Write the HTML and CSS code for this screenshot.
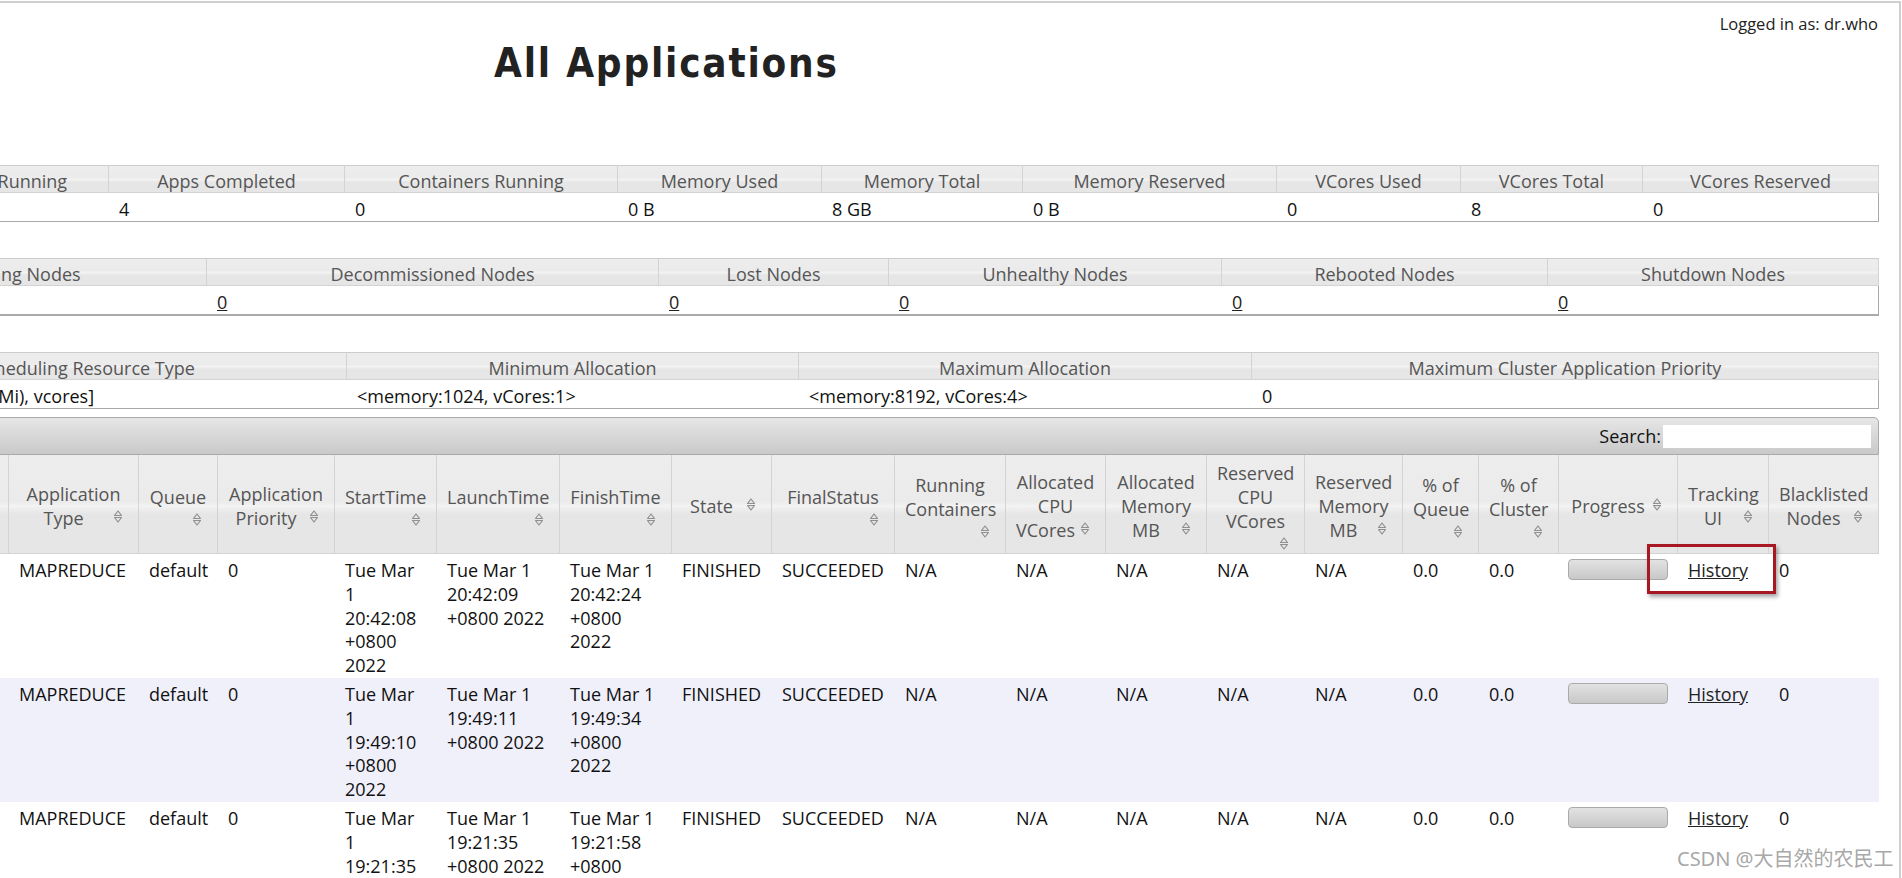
FILE: index.html
```html
<!DOCTYPE html>
<html lang="en">
<head>
<meta charset="UTF-8">
<title>All Applications</title>
<link rel="stylesheet" href="styles.css">
</head>
<body>
<div class="frame">
  <div class="header">
    <div class="user">Logged in as: dr.who</div>
    <h1>All Applications</h1>
  </div>

  <div class="main">
    <!-- cluster metrics -->
    <table class="info">
      <colgroup>
        <col style="width:155px"><col style="width:155px"><col style="width:199px"><col style="width:236px">
        <col style="width:273px"><col style="width:204px"><col style="width:201px"><col style="width:254px">
        <col style="width:184px"><col style="width:182px"><col style="width:236px">
      </colgroup>
      <thead>
        <tr>
          <th>Apps Submitted</th><th>Apps Pending</th><th>Apps Running</th><th>Apps Completed</th>
          <th>Containers Running</th><th>Memory Used</th><th>Memory Total</th><th>Memory Reserved</th>
          <th>VCores Used</th><th>VCores Total</th><th>VCores Reserved</th>
        </tr>
      </thead>
      <tbody>
        <tr>
          <td>4</td><td>0</td><td>0</td><td>4</td><td>0</td><td>0 B</td><td>8 GB</td><td>0 B</td>
          <td>0</td><td>8</td><td>0</td>
        </tr>
      </tbody>
    </table>

    <!-- node metrics -->
    <table class="info nodes">
      <colgroup>
        <col style="width:147px"><col style="width:460px"><col style="width:452px"><col style="width:230px">
        <col style="width:333px"><col style="width:326px"><col style="width:331px">
      </colgroup>
      <thead>
        <tr>
          <th>Active Nodes</th><th>Decommissioning Nodes</th><th>Decommissioned Nodes</th><th>Lost Nodes</th>
          <th>Unhealthy Nodes</th><th>Rebooted Nodes</th><th>Shutdown Nodes</th>
        </tr>
      </thead>
      <tbody>
        <tr>
          <td><a href="#">1</a></td><td><a href="#">0</a></td><td><a href="#">0</a></td><td><a href="#">0</a></td>
          <td><a href="#">0</a></td><td><a href="#">0</a></td><td><a href="#">0</a></td>
        </tr>
      </tbody>
    </table>

    <!-- scheduler -->
    <table class="info sched">
      <colgroup>
        <col style="width:225px"><col style="width:522px"><col style="width:452px"><col style="width:453px"><col style="width:627px">
      </colgroup>
      <thead>
        <tr>
          <th>Scheduler Type</th><th>Scheduling Resource Type</th><th>Minimum Allocation</th>
          <th>Maximum Allocation</th><th>Maximum Cluster Application Priority</th>
        </tr>
      </thead>
      <tbody>
        <tr>
          <td>Capacity Scheduler</td><td>[memory-mb (unit=Mi), vcores]</td><td>&lt;memory:1024, vCores:1&gt;</td>
          <td>&lt;memory:8192, vCores:4&gt;</td><td>0</td>
        </tr>
      </tbody>
    </table>

    <!-- applications -->
    <div class="toolbar">
      <label>Search:</label><input type="text">
    </div>
    <table class="apps">
      <colgroup>
        <col style="width:220px"><col style="width:70px"><col style="width:119px">
        <col style="width:130px"><col style="width:79px"><col style="width:117px"><col style="width:102px">
        <col style="width:123px"><col style="width:112px"><col style="width:100px"><col style="width:123px">
        <col style="width:111px"><col style="width:100px"><col style="width:101px"><col style="width:98px">
        <col style="width:98px"><col style="width:76px"><col style="width:80px"><col style="width:119px">
        <col style="width:91px"><col style="width:110px">
      </colgroup>
      <thead>
        <tr>
          <th><div class="sw">ID<span class="si"></span></div></th>
          <th><div class="sw">User<span class="si"></span></div></th>
          <th><div class="sw">Name<span class="si"></span></div></th>
          <th><div class="sw">Application Type<span class="si"></span></div></th>
          <th><div class="sw">Queue<span class="si"></span></div></th>
          <th><div class="sw">Application Priority<span class="si"></span></div></th>
          <th><div class="sw">StartTime<span class="si"></span></div></th>
          <th><div class="sw">LaunchTime<span class="si"></span></div></th>
          <th><div class="sw">FinishTime<span class="si"></span></div></th>
          <th><div class="sw">State<span class="si"></span></div></th>
          <th><div class="sw">FinalStatus<span class="si"></span></div></th>
          <th><div class="sw">Running Containers<span class="si"></span></div></th>
          <th><div class="sw">Allocated CPU VCores<span class="si"></span></div></th>
          <th><div class="sw">Allocated Memory MB<span class="si"></span></div></th>
          <th><div class="sw">Reserved CPU VCores<span class="si"></span></div></th>
          <th><div class="sw">Reserved Memory MB<span class="si"></span></div></th>
          <th><div class="sw">% of Queue<span class="si"></span></div></th>
          <th><div class="sw">% of Cluster<span class="si"></span></div></th>
          <th><div class="sw">Progress<span class="si"></span></div></th>
          <th><div class="sw">Tracking UI<span class="si"></span></div></th>
          <th><div class="sw">Blacklisted Nodes<span class="si"></span></div></th>
        </tr>
      </thead>
      <tbody>
        <tr>
          <td class="clip"><a href="#">application_1646137323226_0004</a></td><td class="clip">atguigu</td><td class="clip">word count</td>
          <td>MAPREDUCE</td><td>default</td><td>0</td>
          <td>Tue Mar 1 20:42:08 +0800 2022</td><td>Tue Mar 1 20:42:09 +0800 2022</td><td>Tue Mar 1 20:42:24 +0800 2022</td>
          <td>FINISHED</td><td>SUCCEEDED</td><td>N/A</td><td>N/A</td><td>N/A</td><td>N/A</td><td>N/A</td>
          <td>0.0</td><td>0.0</td><td><div class="bar"></div></td>
          <td class="track"><a href="#">History</a><div class="mark"></div></td><td>0</td>
        </tr>
        <tr class="even">
          <td class="clip"><a href="#">application_1646137323226_0003</a></td><td class="clip">atguigu</td><td class="clip">word count</td>
          <td>MAPREDUCE</td><td>default</td><td>0</td>
          <td>Tue Mar 1 19:49:10 +0800 2022</td><td>Tue Mar 1 19:49:11 +0800 2022</td><td>Tue Mar 1 19:49:34 +0800 2022</td>
          <td>FINISHED</td><td>SUCCEEDED</td><td>N/A</td><td>N/A</td><td>N/A</td><td>N/A</td><td>N/A</td>
          <td>0.0</td><td>0.0</td><td><div class="bar"></div></td>
          <td><a href="#">History</a></td><td>0</td>
        </tr>
        <tr>
          <td class="clip"><a href="#">application_1646137323226_0002</a></td><td class="clip">atguigu</td><td class="clip">word count</td>
          <td>MAPREDUCE</td><td>default</td><td>0</td>
          <td>Tue Mar 1 19:21:35 +0800 2022</td><td>Tue Mar 1 19:21:35 +0800 2022</td><td>Tue Mar 1 19:21:58 +0800 2022</td>
          <td>FINISHED</td><td>SUCCEEDED</td><td>N/A</td><td>N/A</td><td>N/A</td><td>N/A</td><td>N/A</td>
          <td>0.0</td><td>0.0</td><td><div class="bar"></div></td>
          <td><a href="#">History</a></td><td>0</td>
        </tr>
        <tr class="even">
          <td class="clip"><a href="#">application_1646137323226_0001</a></td><td class="clip">atguigu</td><td class="clip">word count</td>
          <td>MAPREDUCE</td><td>default</td><td>0</td>
          <td>Tue Mar 1 19:10:02 +0800 2022</td><td>Tue Mar 1 19:10:03 +0800 2022</td><td>Tue Mar 1 19:10:27 +0800 2022</td>
          <td>FINISHED</td><td>SUCCEEDED</td><td>N/A</td><td>N/A</td><td>N/A</td><td>N/A</td><td>N/A</td>
          <td>0.0</td><td>0.0</td><td><div class="bar"></div></td>
          <td><a href="#">History</a></td><td>0</td>
        </tr>
      </tbody>
    </table>
  </div>
</div>
<div class="watermark">CSDN @大自然的农民工</div>
</body>
</html>
```

FILE: styles.css
```css
body {
  margin: 0;
  overflow: hidden;
  background: #fff;
  font-family: "Open Sans", "Noto Sans", sans-serif;
  font-size: 18px;
  color: #111;
}

.frame {
  width: 1899px;
  height: 1000px;
  margin-top: 1px;
  border-top: 2px solid #cfcfcf;
  border-right: 2px solid #cfcfcf;
}

/* header */
.header {
  height: 162px;
  overflow: hidden;
}

.user {
  margin-top: 10px;
  padding-right: 21px;
  text-align: right;
  font-size: 16.5px;
  line-height: 22px;
  color: #222;
}

h1 {
  margin: 5px 0 0 494px;
  font-family: "DejaVu Sans Condensed", "DejaVu Sans", sans-serif;
  font-weight: bold;
  font-size: 40px;
  line-height: 46px;
  letter-spacing: 1.8px;
  color: #222;
}

/* content is scrolled, the left part is out of view */
.main {
  margin-left: -400px;
  width: 2279px;
}

table {
  width: 2279px;
  table-layout: fixed;
  border-spacing: 0;
}

a {
  color: #222;
  text-decoration: underline;
}

/* small info tables */
.info {
  margin-bottom: 36px;
}

.info th {
  padding: 4px 10px 0;
  line-height: 22px;
  font-weight: normal;
  color: #555;
  text-align: center;
  white-space: nowrap;
  background: linear-gradient(#ededed 0%, #ebebeb 45%, #f3f3f3 52%, #e6e6e6 62%, #e6e6e6 100%);
  border-top: 1px solid #cccccc;
  border-bottom: 1px solid #d3d3d3;
  border-right: 1px solid #d3d3d3;
}

.info td {
  padding: 4px 10px 0;
  line-height: 24px;
  white-space: nowrap;
  text-align: left;
  border-bottom: 1px solid #aaa;
}

.info td:last-child {
  border-right: 1px solid #aaa;
}

.nodes td {
  border-bottom-width: 2px;
}

.sched {
  margin-bottom: 8px;
}

/* search bar above the apps table */
.toolbar {
  height: 36px;
  display: flex;
  justify-content: flex-end;
  align-items: center;
  padding-right: 7px;
  border: 1px solid #aaa;
  border-top-right-radius: 5px;
  background: linear-gradient(#e6e6e6, #c9c9c9);
  color: #111;
}

.toolbar label {
  margin-right: 2px;
}

.toolbar input {
  width: 208px;
  height: 23px;
  padding: 0;
  border: none;
  outline: none;
  background: #fff;
}

/* apps table */
.apps th {
  padding: 6px 10px 2px;
  line-height: 24px;
  font-weight: normal;
  color: #555;
  text-align: center;
  vertical-align: middle;
  background: linear-gradient(#ededed 0%, #ebebeb 48%, #f3f3f3 52%, #e6e6e6 60%, #e6e6e6 100%);
  border-right: 1px solid #d3d3d3;
  border-bottom: 1px solid #d3d3d3;
}

.sw {
  display: flow-root;
}

.si {
  float: right;
  width: 10px;
  height: 15px;
  margin: 3px 5px 0 5px;
  background: url("data:image/svg+xml,%3Csvg xmlns='http://www.w3.org/2000/svg' width='10' height='15'%3E%3Cpath d='M1.5 6.5 L5 2 L8.5 6.5 Z M1.5 8.5 L5 13 L8.5 8.5 Z' fill='%23e4e4e4' stroke='%23909090' stroke-width='1.2' stroke-linejoin='round'/%3E%3C/svg%3E") no-repeat;
}

.apps td {
  padding: 5px 10px 0;
  line-height: 23.8px;
  vertical-align: top;
  text-align: left;
  color: #111;
}

.apps td.clip {
  overflow: hidden;
  white-space: nowrap;
}

.apps tr.even td {
  background: #f0f0fb;
}

.bar {
  width: 98px;
  height: 19px;
  margin-left: -1px;
  border: 1px solid #aaa;
  border-radius: 4px;
  background: linear-gradient(#e2e2e2, #c8c8c8);
}

.track {
  position: relative;
}

/* red annotation drawn over the first History link */
.mark {
  position: absolute;
  left: -31px;
  top: -10px;
  width: 123px;
  height: 44px;
  border: 3px solid #a81822;
  box-shadow: 2px 3px 4px rgba(0, 0, 0, 0.35);
}

.watermark {
  position: absolute;
  left: 1677px;
  top: 843px;
  font-family: "Noto Sans", "Noto Sans CJK SC", sans-serif;
  font-size: 20px;
  color: #a8a8a8;
  white-space: nowrap;
}
```
